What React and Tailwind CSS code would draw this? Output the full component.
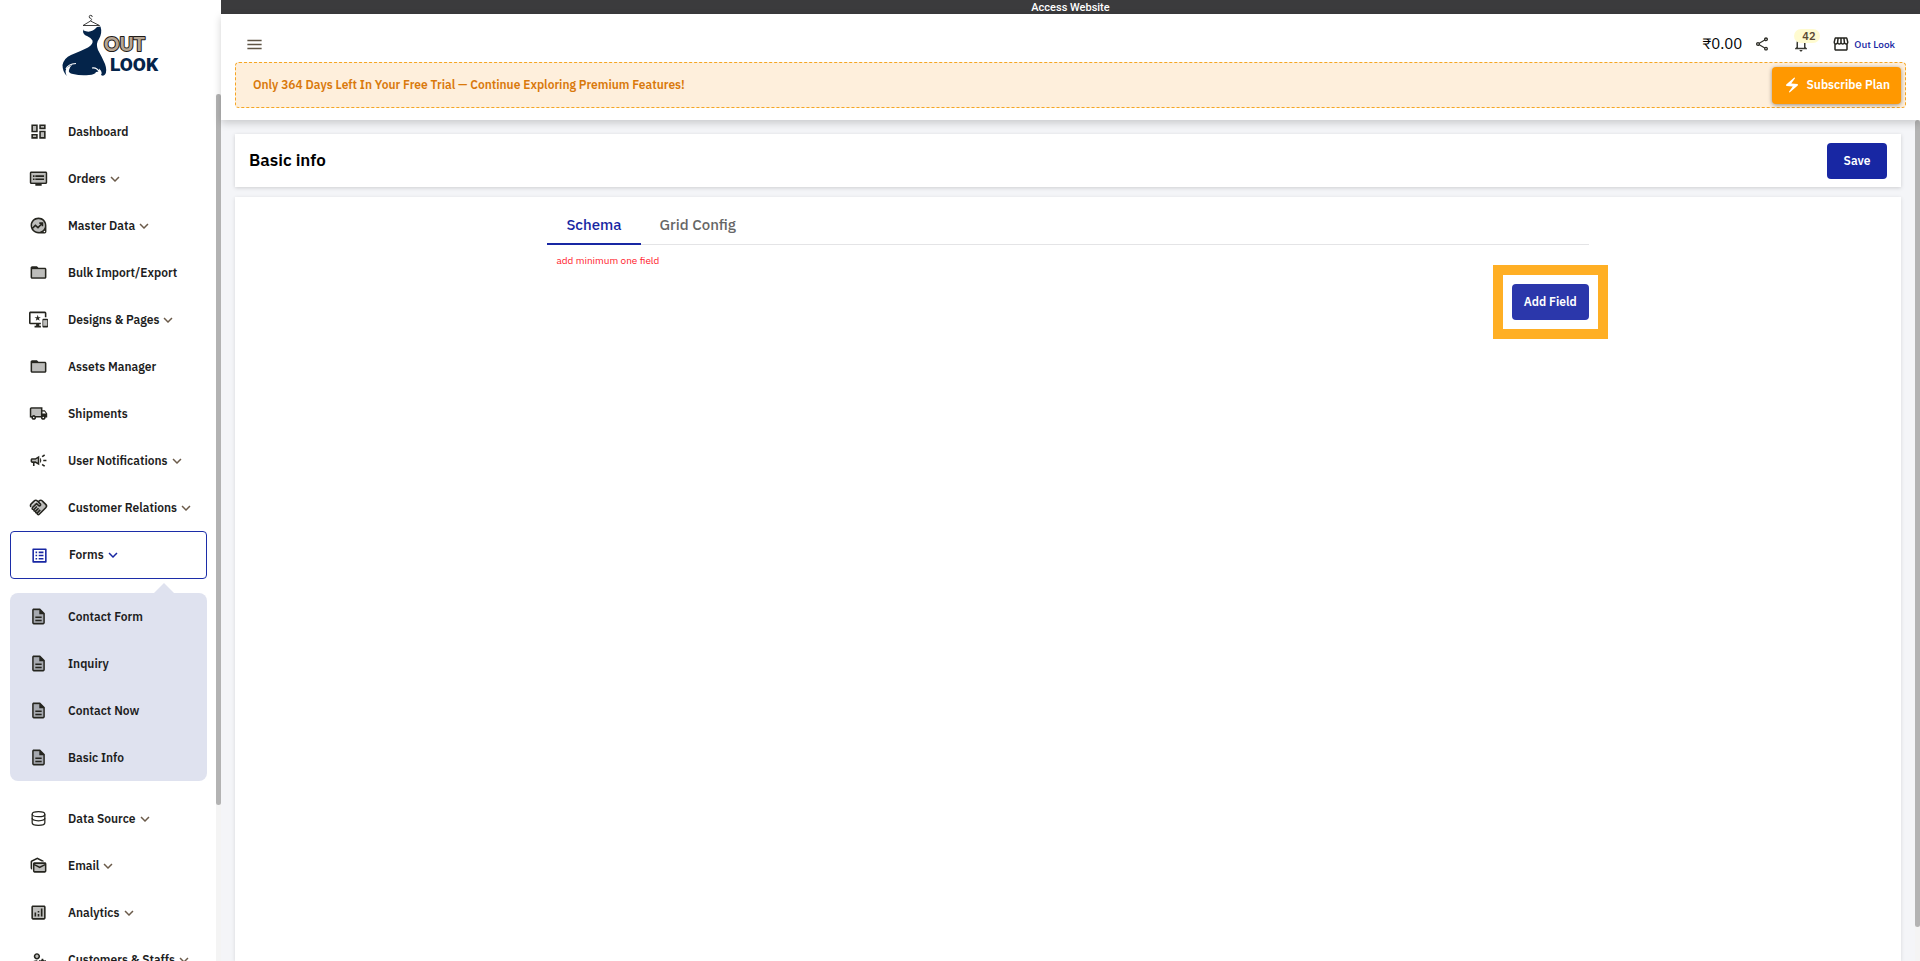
import { useState } from "react";
import {
  MdDvr,
  MdElectricBolt,
  MdFolderOpen,
  MdKeyboardArrowDown,
  MdListAlt,
  MdMenu,
  MdOutlineAnalytics,
  MdOutlineCampaign,
  MdOutlineDashboard,
  MdOutlineDataExploration,
  MdOutlineDescription,
  MdOutlineHandshake,
  MdOutlineImportantDevices,
  MdOutlineLocalShipping,
  MdOutlineManageAccounts,
  MdOutlineMarkAsUnread,
  MdOutlineNotifications,
  MdOutlineShare,
  MdOutlineStorefront,
} from "react-icons/md";

const DatabaseIcon = ({ className }) => (
  <svg viewBox="0 0 24 24" fill="none" stroke="currentColor" strokeWidth="1.6" className={className}>
    <ellipse cx="12" cy="6.500" rx="8" ry="3.200" />
    <path d="M4 6.500 V17.500 C4 19.300 7.500 20.700 12 20.700 S20 19.300 20 17.500 V6.500" />
    <path d="M4 11.500 C4 13.300 7.500 14.900 12 14.900 S20 13.300 20 11.500" />
  </svg>
);

const topLinks = [
  { label: "Dashboard", icon: MdOutlineDashboard, tone: "M5 5h4v6H5zM15 13h4v6h-4zM5 17h4v2H5zM15 5h4v2h-4z" },
  { label: "Orders", icon: MdDvr, tone: "M3 5h18v12H3z", expandable: true },
  { label: "Master Data", icon: MdOutlineDataExploration, tone: "M12 4a8 8 0 1 1 0 16 8 8 0 0 1 0-16z", expandable: true },
  { label: "Bulk Import/Export", icon: MdFolderOpen, tone: "M4 8h16v10H4z" },
  { label: "Designs & Pages", icon: MdOutlineImportantDevices, tone: "M18 13h5v7h-5z", expandable: true },
  { label: "Assets Manager", icon: MdFolderOpen, tone: "M4 8h16v10H4z" },
  { label: "Shipments", icon: MdOutlineLocalShipping, tone: "M3 6h12v9H3z" },
  { label: "User Notifications", icon: MdOutlineCampaign, tone: "M4 11v2h5l2 1.5v-5L9 11z", expandable: true },
  { label: "Customer Relations", icon: MdOutlineHandshake, tone: "M7 5.500L2.500 10l2 3 7 7 3-1 6-6.500 1-3.500-4-3.500-3 0-2.500 1z", expandable: true },
];

const formLinks = ["Contact Form", "Inquiry", "Contact Now", "Basic Info"];

const bottomLinks = [
  { label: "Data Source", icon: DatabaseIcon, expandable: true },
  { label: "Email", icon: MdOutlineMarkAsUnread, tone: "M7 10h13v9H7z", expandable: true },
  { label: "Analytics", icon: MdOutlineAnalytics, tone: "M5 5h14v14H5z", expandable: true },
  { label: "Customers & Staffs", icon: MdOutlineManageAccounts, tone: "M10 6a2 2 0 1 0 0 4 2 2 0 0 0 0-4z", expandable: true },
];

// Outline icon with a light fill behind it
const ToneIcon = ({ icon: Icon, tone }) => (
  <span className="grid w-5 shrink-0 place-items-center text-[#25251f]">
    {tone && (
      <svg viewBox="0 0 24 24" className="col-start-1 row-start-1 size-[19px]">
        <path d={tone} fill="currentColor" opacity="0.3" />
      </svg>
    )}
    <Icon className="col-start-1 row-start-1 size-[19px]" />
  </span>
);

const NavItem = ({ label, icon, tone, expandable }) => (
  <a href="#" className="flex h-[47px] items-center pl-[18px]">
    <ToneIcon icon={icon} tone={tone} />
    <span className="ml-5">{label}</span>
    {expandable && <MdKeyboardArrowDown className="size-[18px] text-[#6b5b4a]" />}
  </a>
);

const Logo = () => (
  <svg viewBox="0 0 100 64" className="h-16 w-[100px]" role="img" aria-label="Out Look">
    <path
      d="M22 11.500 L29.500 7 Q31.500 5.500 29.800 4.300 A1.500 1.500 0 1 1 31.200 3 M29.500 7 L38.500 11.500 M22 11.500 H38.500"
      fill="none"
      stroke="#2b2b2b"
      strokeWidth="0.900"
    />
    <path
      d="M22.500 12.500 Q22 15 22.500 16.500 Q30 20 36 13 L39.500 12.500 Q41.500 19 38 25 Q34.500 29 37 36 Q41 43 44 50 Q46.500 57 44 60.500 Q42.500 62.500 40 61 Q42 58 38 54.500 Q39 58 35 58 Q34 60.500 28 61 Q20 62 12 60 Q7 59 8 56 Q8.500 53 11 51 Q5 53 4.500 57 Q4.500 60 6 62 Q1.500 58 1.500 51 Q3 44 10 41 Q20 37 27 33.500 Q32.500 30 31.500 26.500 Q30 23.500 26 22 Q22 20.500 22 17 Z"
      fill="#04244a"
    />
    <path d="M5 55 Q7 50 15 49.500 M31 54 Q36 53 39.500 59.500" fill="none" stroke="#ffffff" strokeWidth="1.200" />
    <text x="49" y="57" fontSize="19" fontWeight="900" fill="#04244a" className="font-['Roboto','Liberation_Sans',sans-serif]">
      LOOK
    </text>
    <text
      x="43"
      y="37"
      fontSize="19"
      fontWeight="900"
      fill="#b5a593"
      stroke="#1f1b18"
      strokeWidth="2"
      strokeLinejoin="round"
      paintOrder="stroke"
      className="font-['Lato','Liberation_Sans',sans-serif]"
    >
      OUT
    </text>
  </svg>
);

const Sidebar = () => {
  const [formsOpen, setFormsOpen] = useState(true);

  return (
    <aside className="flex w-[221px] shrink-0 flex-col bg-white">
      <div className="flex h-[94px] shrink-0 justify-center pt-3.5">
        <Logo />
      </div>

      <div className="flex min-h-0 flex-1">
        <nav className="min-w-0 flex-1 overflow-hidden pt-3.5 pr-[9px] pl-2.5 text-xs font-semibold text-[#1d1d1d]">
          {topLinks.map((link) => (
            <NavItem key={link.label} {...link} />
          ))}

          <button
            type="button"
            aria-expanded={formsOpen}
            onClick={() => setFormsOpen(!formsOpen)}
            className="flex h-12 w-full items-center rounded-[4px] border border-[#1c2da8] pl-[18px]"
          >
            <span className="grid w-5 place-items-center text-[#1827a3]">
              <MdListAlt className="size-[19px]" />
            </span>
            <span className="ml-5">Forms</span>
            <MdKeyboardArrowDown className="size-[18px] text-[#1827a3]" />
          </button>

          {formsOpen && (
            <div className="relative my-3.5 rounded-[8px] bg-[#dfe2ef]">
              <svg viewBox="0 0 22 11" className="absolute -top-2.5 right-8 h-[11px] w-[22px]">
                <path d="M0 11 L11 0 L22 11 Z" fill="#dfe2ef" />
              </svg>
              {formLinks.map((label) => (
                <NavItem key={label} label={label} icon={MdOutlineDescription} tone="M6 4h7l5 5v11H6z" />
              ))}
            </div>
          )}

          {bottomLinks.map((link) => (
            <NavItem key={link.label} {...link} />
          ))}
        </nav>

        {/* Scroll track */}
        <div className="w-[5px] bg-[#f4f4f4]">
          <div className="h-[82%] rounded-full bg-[#b3b3b3]" />
        </div>
      </div>
    </aside>
  );
};

const Header = () => (
  <header className="relative z-10 bg-white px-3.5 pb-3 shadow-[0_3px_8px_rgba(0,0,0,0.18)]">
    <div className="flex h-12 items-center justify-between pt-3 pr-[11px] pl-2.5">
      <button type="button" aria-label="Toggle menu" className="text-[#5f5546]">
        <MdMenu className="size-[19px]" />
      </button>

      <div className="flex items-center">
        <span className="text-[15px] text-black">₹0.00</span>
        <button type="button" aria-label="Share" className="ml-3 text-[#2c2c26]">
          <MdOutlineShare className="size-4" />
        </button>
        <button type="button" aria-label="Notifications" className="relative ml-[22px] text-[#3a3a34]">
          <MdOutlineNotifications className="size-[18px]" />
          <span className="absolute -top-1.5 left-0.5 rounded-[8px] bg-[#fffbd0] pr-1 pl-2 text-[11px] leading-[14px] font-semibold text-[#5b4a35]">
            42
          </span>
        </button>
        <a href="#" className="ml-[22px] flex items-center gap-1 text-[10px] font-medium text-[#1827a3]">
          <MdOutlineStorefront className="size-[18px] text-[#25251f]" />
          Out Look
        </a>
      </div>
    </div>

    <div className="flex h-[46px] items-center justify-between rounded-[4px] border border-dashed border-[#f5a623] bg-[#feefdc] pr-1 pl-[17px]">
      <span className="text-xs font-semibold text-[#d9790b]">
        Only 364 Days Left In Your Free Trial — Continue Exploring Premium Features!
      </span>
      <button
        type="button"
        className="flex h-[37px] items-center gap-1.5 rounded-[4px] bg-[#ff9800] px-[11px] text-xs font-semibold text-white shadow-[0_1px_4px_rgba(0,0,0,0.4)]"
      >
        <MdElectricBolt className="size-[18px]" />
        Subscribe Plan
      </button>
    </div>
  </header>
);

const SchemaPanel = () => {
  const [tab, setTab] = useState("Schema");

  return (
    <section className="flex-1 bg-white shadow-[0_1px_4px_rgba(0,0,0,0.12)]">
      <div className="mx-auto w-[62.5%]">
        <div role="tablist" className="flex border-b border-[#e4e4e6] text-[15px] font-medium">
          {["Schema", "Grid Config"].map((name) => (
            <button
              key={name}
              type="button"
              role="tab"
              aria-selected={tab === name}
              onClick={() => setTab(name)}
              className={
                tab === name
                  ? "-mb-px h-12 border-b-2 border-[#1827a3] px-[19px] pt-2.5 text-[#1827a3]"
                  : "-mb-px h-12 border-b-2 border-transparent px-[19px] pt-2.5 text-[#666666]"
              }
            >
              {name}
            </button>
          ))}
        </div>

        <p className="mt-2 pl-[9px] text-[10px] leading-4 text-[#ff1a2d]">add minimum one field</p>

        <div className="mt-[15px] flex justify-end">
          <div className="relative">
            <button type="button" className="h-9 rounded-[4px] bg-[#2b37ab] px-3 text-xs font-semibold text-white">
              Add Field
            </button>
            <div className="pointer-events-none absolute -inset-[19px] border-10 border-[#ffaf24]" />
          </div>
        </div>
      </div>
    </section>
  );
};

export default function App() {
  return (
    <div className="flex h-screen overflow-hidden bg-[#f4f5f8] font-['IBM_Plex_Sans','Noto_Sans',sans-serif]">
      <Sidebar />

      <div className="flex min-w-0 flex-1 flex-col">
        <div className="h-3.5 bg-[#3b3b3d] text-center text-[11px] leading-[14px] font-medium text-white">
          <a href="#" className="font-['Roboto',sans-serif]">Access Website</a>
        </div>
        <Header />

        <div className="flex min-h-0 flex-1">
          <main className="flex min-w-0 flex-1 flex-col gap-2.5 px-3.5 pt-3.5">
            <section className="flex h-[53px] shrink-0 items-center justify-between bg-white px-3.5 shadow-[0_1px_4px_rgba(0,0,0,0.16)]">
              <h1 className="text-[17px] font-semibold text-black">Basic info</h1>
              <button type="button" className="h-9 w-[60px] rounded-[4px] bg-[#1827a3] text-xs font-semibold text-white">
                Save
              </button>
            </section>
            <SchemaPanel />
          </main>

          {/* Scroll track */}
          <div className="w-[5px] bg-[#f4f4f4]">
            <div className="h-[96%] rounded-full bg-[#b3b3b3]" />
          </div>
        </div>
      </div>
    </div>
  );
}
